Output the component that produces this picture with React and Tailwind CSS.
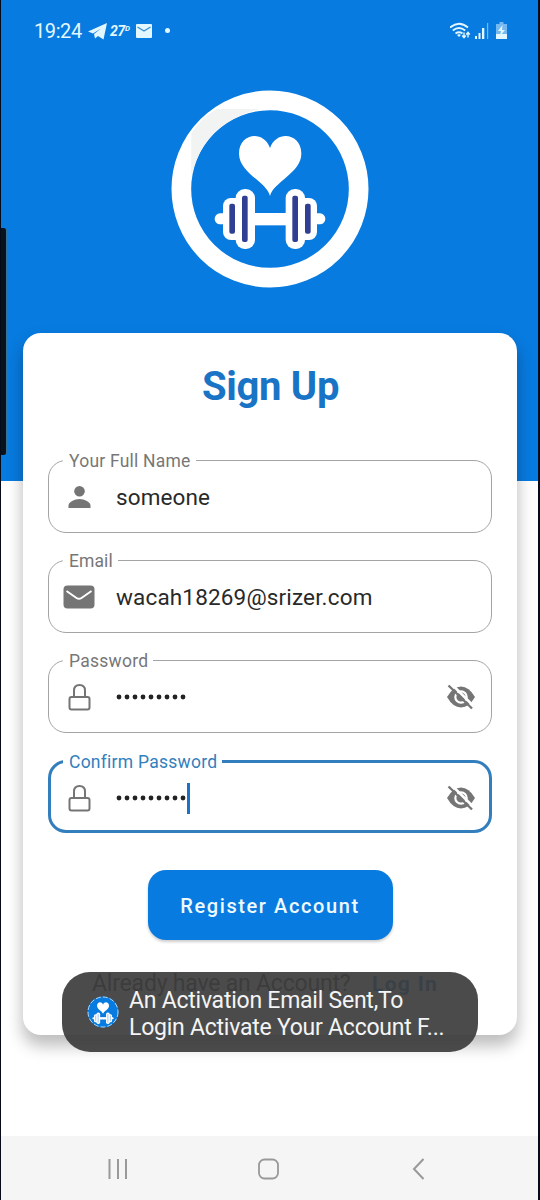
import React from "react";

function Dumbbell() {
  return (
    <>
      <g fill="#fff">
        <rect x="164" y="400" width="60" height="33" rx="16" />
        <rect x="436" y="400" width="60" height="33" rx="16" />
        <rect x="270" y="399" width="120" height="37" />
        <rect x="189" y="354" width="70" height="126" rx="24" />
        <rect x="401" y="354" width="70" height="126" rx="24" />
        <rect x="227" y="327" width="58" height="180" rx="27" />
        <rect x="377" y="327" width="58" height="180" rx="27" />
      </g>
      <path
        d="M330 348C320 306 237 278 237 221C237 161 309 148 330 204C351 148 424 161 424 221C424 278 340 306 330 348Z"
        fill="#fff"
      />
    </>
  );
}

function Logo() {
  return (
    <svg className="h-[220px] w-[220px] shrink-0" viewBox="0 0 660 660">
      <circle cx="330" cy="327" r="266" fill="none" stroke="#fff" strokeWidth="59" />
      <path d="M94 284V160Q125 111 170 87H300Q135 125 94 284Z" fill="#f1f4f3" />
      <Dumbbell />
      <g fill="#303f91">
        <rect x="208" y="371" width="17" height="90" rx="6" />
        <rect x="246" y="347" width="17" height="139" rx="6" />
        <rect x="397" y="347" width="17" height="139" rx="6" />
        <rect x="435" y="371" width="17" height="90" rx="6" />
      </g>
    </svg>
  );
}

function ToastLogo() {
  return (
    <svg className="h-[32px] w-[32px] shrink-0" viewBox="0 0 32 32">
      <circle cx="16" cy="16" r="15.5" fill="#087be0" />
      <circle cx="16" cy="16" r="15" fill="none" stroke="#dcecf8" strokeWidth="0.8" strokeDasharray="5 2" />
      <g transform="translate(-5.1 -4.4) scale(.064)">
        <Dumbbell />
        <path d="M216 373v86M254 350v134M406 350v134M444 373v86" stroke="#69a8df" strokeWidth="10" />
      </g>
    </svg>
  );
}

function StatusBar() {
  return (
    <div className="flex h-[60px] shrink-0 items-center justify-between pl-[33px] pr-[31px] pt-[1px] text-[#e2f7ff]">
      <div className="flex items-center">
        <span className="w-[54px] text-[20px] tracking-[-0.4px]">19:24</span>
        <svg className="h-[18px] w-[20px]" viewBox="0 0 20 18" fill="currentColor">
          <path d="M0 9.500 19 1 15.500 17.500 10 14 7 16.500 6 12 13 6.500 5 11.500Z" />
        </svg>
        <span className="ml-[2px] flex w-[26px] text-[14px] font-bold italic leading-4 tracking-[-0.3px]">
          27<span className="text-[8px] leading-[11px]">D</span>
        </span>
        <svg className="h-[14px] w-[16px]" viewBox="0 0 16 14">
          <rect width="16" height="14" rx="1" fill="currentColor" />
          <path d="m1.500 3 6.500 4L14.500 3" fill="none" stroke="#3b8fcf" strokeWidth="1.3" />
        </svg>
        <span className="ml-[13px] h-[5px] w-[5px] rounded-full bg-[#e2f7ff]" />
      </div>
      <div className="flex items-center">
        <svg className="h-[18px] w-[22px]" viewBox="0 0 22 18" fill="none" stroke="currentColor">
          <path d="M0 5.500Q9-2 18 5.500M2.800 8.500Q9 3.600 15.200 8.500M5.500 11.500Q9 9 12.500 11.500" strokeWidth="1.8" />
          <path d="m7 13 2-1 2 1-2 2Z" fill="currentColor" stroke="none" />
          <path d="M14 10.500v5m-1.800-2 1.800 2.200 1.800-2.200M18 15.500v-5m-1.800 2 1.800-2.200 1.800 2.200" strokeWidth="1.4" />
        </svg>
        <svg className="ml-[3px] h-[17px] w-[14px]" viewBox="0 0 14 17" fill="currentColor">
          <path d="M0 14h2v3H0zM3.500 11h2v6h-2zM7 6h2.300v11H7z" />
          <path d="M12 1h1.200v16H12z" opacity=".5" />
        </svg>
        <svg className="ml-[7px] h-[17px] w-[11px]" viewBox="0 0 11 17" fill="currentColor">
          <path d="M3.500 0h4v2H11v15H0V2h3.500z" opacity=".5" />
          <path d="M0 12h11v5H0z" />
          <path d="M6.500 3 2 9h3l-1 5 5-6H6z" />
        </svg>
      </div>
    </div>
  );
}

function PersonIcon() {
  return (
    <svg className="h-[24px] w-[32px]" viewBox="0 0 32 24" fill="#757575">
      <circle cx="16.500" cy="6.300" r="5.300" />
      <path d="M5.500 23v-2.500c0-3.500 6-6.500 11-6.500s11 3 11 6.500V23Z" />
    </svg>
  );
}

function MailIcon() {
  return (
    <svg className="h-[24px] w-[32px]" viewBox="0 0 32 24">
      <rect x=".5" y=".5" width="31" height="23" rx="4" fill="#757575" />
      <path d="m3.500 6 10 7q2.500 1.700 5 0l10-7" fill="none" stroke="#fff" strokeWidth="2" />
    </svg>
  );
}

function LockIcon() {
  return (
    <svg className="h-[28px] w-[32px]" viewBox="0 0 32 28" fill="none" stroke="#757575" strokeWidth="2">
      <rect x="6.500" y="14" width="20" height="12.500" rx="2" />
      <path d="M11 14V7.500q0-5.500 5.500-5.500T22 7.500V14" />
    </svg>
  );
}

function HiddenIcon() {
  return (
    <svg className="h-[26px] w-[30px]" viewBox="0 0 30 26">
      <path d="M1 13Q7 2.500 15 2.500T29 13Q23 23.500 15 23.500T1 13Z" fill="#757575" />
      <circle cx="15" cy="13" r="5.700" fill="none" stroke="#fff" strokeWidth="2.200" />
      <path d="M5.500 0 29 23.500" stroke="#fff" strokeWidth="2.600" />
      <path d="m2.500 1.500 23.500 23" stroke="#757575" strokeWidth="2.400" />
    </svg>
  );
}

function Dots() {
  return (
    <svg className="h-[8px] w-[71px]" viewBox="0 0 71 8" fill="#222">
      {[3, 11, 19, 27, 35, 43, 51, 59, 67].map((x) => (
        <circle key={x} cx={x} cy="4" r="2.400" />
      ))}
    </svg>
  );
}

function Field({ label, labelClass, icon, focused, secret, children }) {
  return (
    <fieldset
      className={
        focused
          ? "mt-[20px] h-[80px] min-w-0 rounded-[18px] border-[3px] border-[#337fbd] pl-[12px] pr-[13px] text-[#337fbd]"
          : "mb-[19px] h-[81px] min-w-0 rounded-[18px] border border-[#a4a4a4] pl-[14px] pr-[15px] text-[#777]"
      }
    >
      <legend className="h-[17px] whitespace-nowrap pl-[6px] pr-[5px] text-[17.500px] leading-[19px]">
        <span className={labelClass}>{label}</span>
      </legend>
      <div className="flex h-[56px] items-center">
        <span className="flex w-[32px]">{icon}</span>
        <div className="ml-[21px] flex flex-1 items-center whitespace-nowrap text-[22.500px] text-[#292929]">{children}</div>
        {secret && <HiddenIcon />}
      </div>
    </fieldset>
  );
}

export default function App() {
  return (
    <div className="relative flex h-[1200px] w-[540px] flex-col overflow-hidden border-l border-r-2 border-[#050b18] bg-[linear-gradient(#087be0_481px,#fff_481px)] font-['Roboto',sans-serif]">
      <StatusBar />
      <div className="flex h-[273px] shrink-0 justify-center pl-[1px] pt-[20px]">
        <Logo />
      </div>

      <main className="ml-[22px] flex h-[702px] w-[494px] shrink-0 flex-col rounded-[18px] bg-white px-[25px] shadow-[0_10px_16px_1px_rgba(0,0,0,0.26)]">
        <h1 className="mt-[29px] h-[48px] pl-[1px] text-center text-[40px] font-bold leading-[49px] tracking-[-0.3px] text-[#1974c6]">Sign Up</h1>
        <form className="mt-[42px] flex flex-col">
          <Field label="Your Full Name" labelClass="tracking-[0.22px]" icon={<PersonIcon />}>
            <span className="pt-[2px] tracking-[0.1px]">someone</span>
          </Field>
          <Field label="Email" labelClass="tracking-[0.1px]" icon={<MailIcon />}>
            <span className="pt-[2px] tracking-[0.16px]">wacah18269@srizer.com</span>
          </Field>
          <Field label="Password" labelClass="tracking-[0.25px]" icon={<LockIcon />} secret>
            <Dots />
          </Field>
          <div className="-mt-[19px]">
            <Field label="Confirm Password" labelClass="tracking-[0.25px]" icon={<LockIcon />} focused secret>
              <Dots />
              <span className="h-[31px] w-[3px] bg-[#1974c6]" />
            </Field>
          </div>
          <button
            type="button"
            className="mt-[37px] h-[70px] w-[245px] self-center rounded-[18px] bg-[#087be0] pt-[2px] text-[20px] font-medium tracking-[1.6px] text-[#edfaff] shadow-[0_2px_3px_rgba(0,0,0,0.2)]"
          >
            Register Account
          </button>
        </form>
        <p className="mt-[30px] flex whitespace-nowrap pl-[44px] text-[23px] leading-[28px] tracking-[-0.2px] text-[#444]">
          <span className="w-[280px]">Already have an Account?</span>
          <span className="text-[21px] font-bold tracking-[1.300px] text-[#1974c6]">Log In</span>
        </p>
      </main>

      <nav className="mt-auto flex h-[64px] shrink-0 items-center justify-between bg-[#f5f5f5] pl-[104px] pr-[108px] pt-[1px] text-[#999]">
        <svg className="h-[24px] w-[26px]" viewBox="0 0 26 24" stroke="currentColor" strokeWidth="2">
          <path d="M4.500 2v20M13 2v20M21 2v20" />
        </svg>
        <svg className="h-[24px] w-[24px]" viewBox="0 0 24 24" fill="none" stroke="currentColor" strokeWidth="1.800">
          <rect x="2" y="2.500" width="19" height="19" rx="5.500" />
        </svg>
        <svg className="h-[24px] w-[24px]" viewBox="0 0 24 24" fill="none" stroke="currentColor" strokeWidth="2">
          <path d="M17.500 2 8 12l9.500 10" />
        </svg>
      </nav>

      <div className="absolute -left-px top-[228px] h-[227px] w-[7px] rounded-r-[3px] border-r border-[#3c7293] bg-[#07131e]" />
      <div className="absolute left-[61px] top-[972px] flex h-[80px] w-[416px] items-center rounded-[28px] bg-[rgba(60,60,60,0.92)] pl-[25px]">
        <ToastLogo />
        <p className="ml-[10px] whitespace-nowrap pt-[3px] text-[23px] leading-[27px] tracking-[-0.24px] text-[#f4f4f4]">
          An Activation Email Sent,To
          <br />
          Login Activate Your Account F...
        </p>
      </div>
    </div>
  );
}
